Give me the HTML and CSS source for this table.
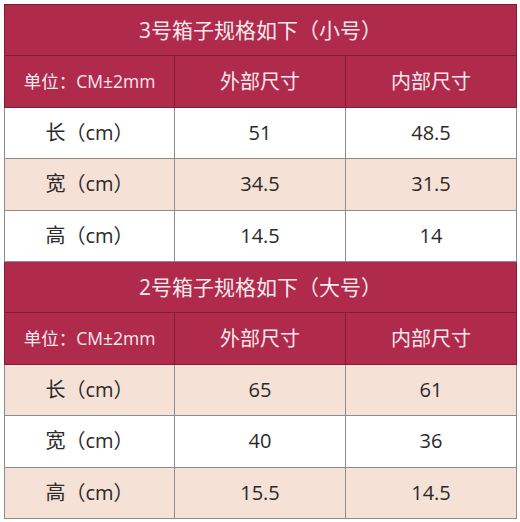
FILE: index.html
```html
<!DOCTYPE html>
<html lang="zh">
<head>
<meta charset="utf-8">
<link rel="stylesheet" href="styles.css">
</head>
<body>
<table class="spec">
  <colgroup><col class="c1"><col class="c2"><col class="c3"></colgroup>
  <tr class="title"><td colspan="3">3号箱子规格如下（小号）</td></tr>
  <tr class="head"><td class="unit">单位：CM±2mm</td><td>外部尺寸</td><td>内部尺寸</td></tr>
  <tr class="white"><td>长（cm）</td><td>51</td><td>48.5</td></tr>
  <tr class="pink"><td>宽（cm）</td><td>34.5</td><td>31.5</td></tr>
  <tr class="white"><td>高（cm）</td><td>14.5</td><td>14</td></tr>
  <tr class="title"><td colspan="3">2号箱子规格如下（大号）</td></tr>
  <tr class="head"><td class="unit">单位：CM±2mm</td><td>外部尺寸</td><td>内部尺寸</td></tr>
  <tr class="pink"><td>长（cm）</td><td>65</td><td>61</td></tr>
  <tr class="white"><td>宽（cm）</td><td>40</td><td>36</td></tr>
  <tr class="pink"><td>高（cm）</td><td>15.5</td><td>14.5</td></tr>
</table>
</body>
</html>
```
FILE: styles.css
```css
html, body {
  margin: 0;
  padding: 0;
  background: #ffffff;
}
body {
  padding: 4px 4px 0 4px;
  font-family: "Open Sans", "Noto Sans CJK SC", sans-serif;
}
.spec {
  width: 512px;
  border-collapse: collapse;
  table-layout: fixed;
}
.c1 { width: 170px; }
.c2 { width: 171px; }
.c3 { width: 171px; }
.spec td {
  border: 1px solid #8c8c8c;
  text-align: center;
  vertical-align: middle;
  padding: 0;
  height: 50.4px;
  font-size: 20px;
  color: #2a2a2a;
  line-height: 1;
}
.spec tr.title td {
  background: #b02a4c;
  color: #f7e8ec;
  font-size: 21px;
  border-color: #7d1f36;
}
.spec tr.head td {
  background: #b02a4c;
  color: #f7e8ec;
  border-color: #7d1f36;
}
.spec tr.head td.unit {
  font-size: 17.5px;
}
.spec tr.pink td {
  background: #f6e1d7;
}
.spec tr.white td {
  background: #ffffff;
}
```
